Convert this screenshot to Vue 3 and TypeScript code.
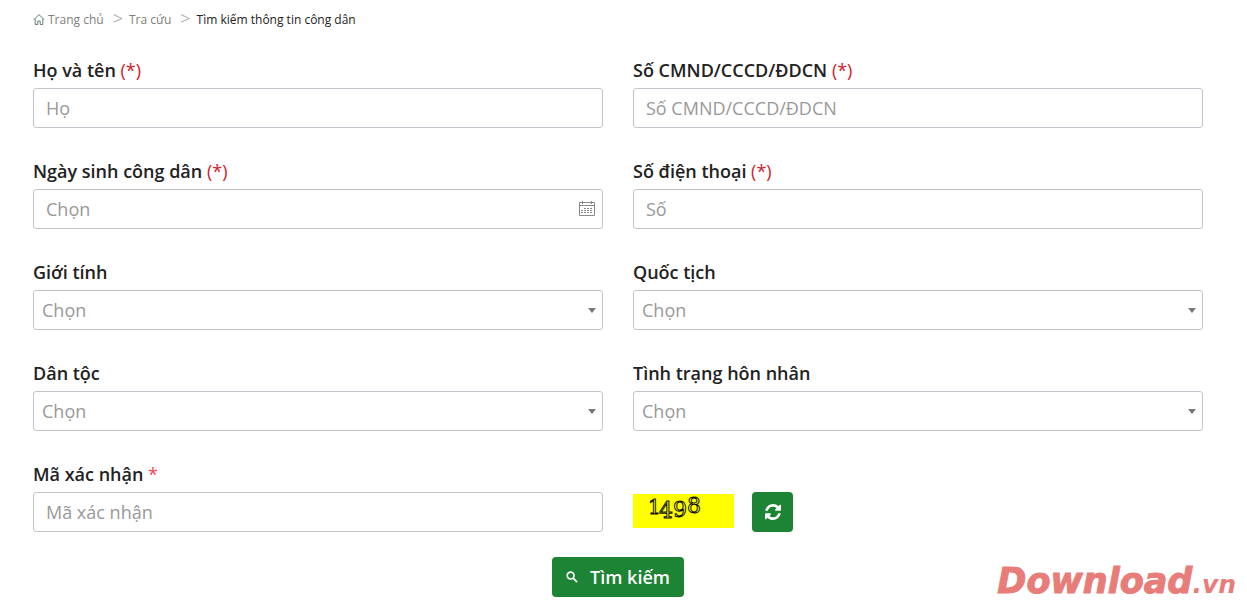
<script setup lang="ts">
import { ref } from 'vue'

interface Field {
  id: string
  label: string
  mark?: string
  placeholder: string
  kind: 'text' | 'date' | 'select'
}

const fields: Field[] = [
  { id: 'name', label: 'Họ và tên', mark: '(*)', placeholder: 'Họ', kind: 'text' },
  { id: 'idno', label: 'Số CMND/CCCD/ĐDCN', mark: '(*)', placeholder: 'Số CMND/CCCD/ĐDCN', kind: 'text' },
  { id: 'birth', label: 'Ngày sinh công dân', mark: '(*)', placeholder: 'Chọn', kind: 'date' },
  { id: 'phone', label: 'Số điện thoại', mark: '(*)', placeholder: 'Số', kind: 'text' },
  { id: 'gender', label: 'Giới tính', placeholder: 'Chọn', kind: 'select' },
  { id: 'nation', label: 'Quốc tịch', placeholder: 'Chọn', kind: 'select' },
  { id: 'ethnic', label: 'Dân tộc', placeholder: 'Chọn', kind: 'select' },
  { id: 'marital', label: 'Tình trạng hôn nhân', placeholder: 'Chọn', kind: 'select' },
]
const values = ref<Record<string, string>>(Object.fromEntries(fields.map((f) => [f.id, ''])))
const code = ref('')
</script>

<template>
  <main class="page">
    <nav class="crumbs" aria-label="Breadcrumb">
      <a href="#" class="home">
        <svg width="12" height="12" viewBox="0 0 12 12" fill="none" stroke="#6c8074" stroke-width="1" aria-hidden="true">
          <path d="M.7 5.700 6 .7l5.300 5M2.200 4.700v5.800h2.600V7h2.400v3.500h2.600V4.700" />
        </svg>
        Trang chủ</a>
      <span class="sep">&gt;</span>
      <a href="#">Tra cứu</a>
      <span class="sep">&gt;</span>
      <span class="current">Tìm kiếm thông tin công dân</span>
    </nav>
    <form @submit.prevent>
      <div class="grid">
        <div v-for="f in fields" :key="f.id" class="field">
          <label :for="f.id">{{ f.label }} <span v-if="f.mark" class="req">{{ f.mark }}</span></label>
          <div class="control">
            <select v-if="f.kind === 'select'" :id="f.id" v-model="values[f.id]">
              <option value="">{{ f.placeholder }}</option>
            </select>
            <input v-else :id="f.id" v-model="values[f.id]" type="text" :placeholder="f.placeholder" />
            <svg v-if="f.kind === 'select'" class="arrow" width="8" height="5" viewBox="0 0 8 5" aria-hidden="true">
              <path d="M0 0h8L4 5z" fill="#777" />
            </svg>
            <svg v-if="f.kind === 'date'" class="calendar" width="16" height="15" viewBox="0 0 16 15" fill="none" stroke="#888" aria-hidden="true">
              <path d="M.5 1.500h15v13H.5zM.5 4.500h15M3.500 0v3M12.500 0v3" />
              <path d="M5 7.500h9M2 9.500h12M2 11.500h12" stroke-dasharray="2 1" />
            </svg>
          </div>
        </div>
        <div class="field">
          <label for="code">Mã xác nhận <span class="star">*</span></label>
          <div class="control">
            <input id="code" v-model="code" type="text" placeholder="Mã xác nhận" />
          </div>
        </div>
        <div class="captcha-row">
          <div class="captcha">
            <svg width="60" height="30" viewBox="0 0 60 30" role="img" aria-label="1498">
              <g class="digits">
                <text class="small" x="1" y="20">1</text>
                <text x="12" y="24">4</text>
                <text x="26" y="23">9</text>
                <text x="40" y="19">8</text>
              </g>
            </svg>
          </div>
          <button type="button" class="green refresh" aria-label="Làm mới">
            <svg width="16" height="16" viewBox="0 0 1536 1536" fill="#fff" aria-hidden="true">
              <path d="M1511 928q0 5-1 7-64 268-268 434.500T764 1536q-146 0-282.500-55T238 1324l-129 129q-19 19-45 19t-45-19-19-45V960q0-26 19-45t45-19h448q26 0 45 19t19 45-19 45l-137 137q71 66 161 102t187 36q134 0 250-65t186-179q11-17 53-117 8-23 30-23h192q13 0 22.500 9.500t9.500 22.500zm25-800v448q0 26-19 45t-45 19h-448q-26 0-45-19t-19-45 19-45l138-138Q969 256 768 256q-134 0-250 65T332 500q-11 17-53 117-8 23-30 23H50q-13 0-22.500-9.500T18 608v-7q65-268 270-434.500T768 0q146 0 284 55.500T1297 212l130-129q19-19 45-19t45 19 19 45z" />
            </svg>
          </button>
        </div>
      </div>
      <div class="actions">
        <button type="submit" class="green search">
          <svg width="12" height="12" viewBox="0 0 13 13" fill="none" stroke="#fff" stroke-width="1.800" aria-hidden="true">
            <circle cx="5" cy="5" r="3.700" />
            <path d="m7.500 7.500 4.500 4.500" />
          </svg>
          Tìm kiếm
        </button>
      </div>
    </form>
    <div class="brand">Download<span class="suffix">.vn</span></div>
  </main>
</template>

<style>
body { margin: 0; background: #fff; }
</style>

<style scoped>
.page { position: relative; padding: 10px 44px 4px 33px; font-family: "Open Sans", "Noto Sans", sans-serif; color: #222; }
.crumbs { display: flex; align-items: center; height: 20px; font-size: 12px; line-height: 16px; color: #222; }
.crumbs a { color: #808080; text-decoration: none; }
.home { display: flex; align-items: center; gap: 3px; }
.sep { margin: 0 6px 0 9px; padding-bottom: 4px; font-size: 18px; color: #b4b4b4; line-height: 16px; }
.grid { display: grid; grid-template-columns: 1fr 1fr; gap: 29px 30px; margin-top: 26px; }
label { display: block; margin-bottom: 4px; line-height: 28px; font-size: 18px; font-weight: 600; white-space: nowrap; }
.req { font-weight: 400; color: #d0202c; }
.star { color: #f04858; font-weight: 400; }
.control { position: relative; }
input, select { display: block; box-sizing: border-box; width: 100%; height: 40px; border: 1px solid #c4c4cc; border-radius: 3px; padding: 0 12px; background: #fff; font: 18px "Open Sans", "Noto Sans", sans-serif; color: #999; appearance: none; outline: none; }
select { padding: 0 8px; }
input::placeholder { color: #999; opacity: 1; }
.arrow { position: absolute; right: 7px; top: 18px; pointer-events: none; }
.calendar { position: absolute; right: 8px; top: 12px; }
.captcha-row { display: flex; align-items: flex-end; gap: 18px; }
.captcha { box-sizing: border-box; width: 101px; height: 34px; padding-left: 14px; margin-bottom: 4px; background: #ff0; }
.captcha svg { display: block; overflow: visible; }
.digits { font: 22px "DejaVu Serif", serif; fill: none; stroke: #111; stroke-width: 1px; }
.small { font-size: 20px; }
.green { display: flex; align-items: center; justify-content: center; height: 40px; border: 0; border-radius: 4px; background: #1c8434; color: #fff; }
.refresh { width: 41px; padding: 0; }
.actions { display: flex; justify-content: center; margin-top: 25px; }
.search { gap: 12px; width: 132px; padding: 0; font: 600 18px/24px "Open Sans", sans-serif; }
.brand { position: absolute; right: 11px; bottom: 0; font: italic 700 35px/32px "DejaVu Sans", sans-serif; color: #e87c78; -webkit-text-stroke: 1px #e87c78; }
.suffix { font-size: 25px; -webkit-text-stroke: 0; }
</style>
